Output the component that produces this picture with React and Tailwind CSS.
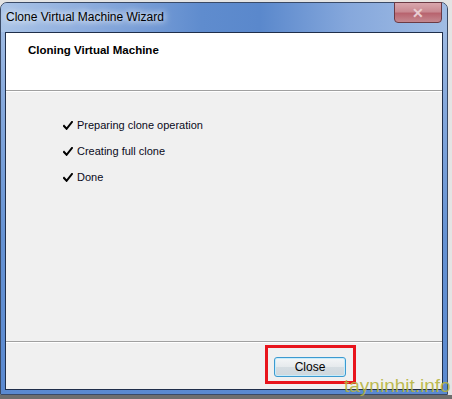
import React from "react";

function Check() {
  return (
    <svg width="10" height="9" viewBox="0 0 10 9" className="shrink-0">
      <path d="M1 5 L3.6 7.8 L9 1" fill="none" stroke="#000" strokeWidth="2" strokeLinecap="square" />
    </svg>
  );
}

export default function App() {
  const ui = { fontFamily: '"Liberation Sans", Arial, sans-serif' };
  return (
    <div className="relative w-[452px] h-[399px] overflow-hidden bg-[#e4e4e4]" style={ui}>
      <div className="absolute left-0 right-0 bottom-0 h-[4px] bg-[#6e6e6e]" />
      <div className="w-[448px] h-[395px] pt-[2px]">
        <div className="relative flex flex-col h-[393px] rounded-t-[7px] border border-[#3a4a66] bg-[linear-gradient(180deg,#a7c1e6_0%,#86a9dc_25%,#6592d3_60%,#5a89d0_100%)] px-[4px] pb-[4px]">
          <div className="flex h-[29px] items-start justify-between -mx-[4px] px-[5px] rounded-t-[6px] bg-[linear-gradient(90deg,#aac4e7_0%,#88a9dc_22%,#5f8cce_45%,#5a88cc_58%,#86a8dc_78%,#a0bce4_100%)]">
            <div className="pt-[7px] text-[12px] leading-[15px] text-black [text-shadow:0_0_6px_#fff,0_0_10px_#fff]">
              Clone Virtual Machine Wizard
            </div>
            <div className="mt-[-1px] flex h-[21px] w-[48px] items-center justify-center rounded-b-[4px] border border-[#6b3a44] bg-[linear-gradient(180deg,#d9a7ad_0%,#c98a92_45%,#b8646f_55%,#c58890_100%)]">
              <span className="text-[14px] font-bold leading-none text-[#e9cdd1]">✕</span>
            </div>
          </div>
          <div className="flex flex-1 flex-col border border-[#1f2e4a] bg-[#f0f0f0]">
            <div className="h-[57px] bg-white pl-[22px] pt-[10px]">
              <div className="text-[11.5px] font-bold leading-[14px] text-black">Cloning Virtual Machine</div>
            </div>
            <div className="h-px bg-[#a0a0a0]" />
            <div className="h-px bg-white" />
            <div className="flex flex-1 flex-col gap-[12px] pl-[57px] pt-[26px]">
              <div className="flex items-center gap-[4px] text-[11px] leading-[14px] text-[#0a0a1a]">
                <Check />
                <span>Preparing clone operation</span>
              </div>
              <div className="flex items-center gap-[4px] text-[11px] leading-[14px] text-[#0a0a1a]">
                <Check />
                <span>Creating full clone</span>
              </div>
              <div className="flex items-center gap-[4px] text-[11px] leading-[14px] text-[#0a0a1a]">
                <Check />
                <span>Done</span>
              </div>
            </div>
            <div className="h-px bg-[#a0a0a0]" />
            <div className="h-px bg-white" />
            <div className="flex h-[46px] items-start justify-end pr-[86px] pt-[2px]">
              <div className="border-[3px] border-[#e8141c] pl-[6px] pr-[7px] pt-[9px] pb-[4px]">
                <button className="flex h-[20px] w-[72px] items-center justify-center rounded-[3px] border border-[#3c9ad0] bg-[linear-gradient(180deg,#f4f6f7_0%,#e6eaed_48%,#d5dde2_52%,#cfd7dd_100%)] text-[12px] text-black shadow-[inset_0_0_0_1px_#c7ecfb]">
                  Close
                </button>
              </div>
            </div>
          </div>
        </div>
      </div>
      <div className="pointer-events-none absolute left-[344px] top-[375px] text-[19px] leading-[22px] text-[#b5b33c]/90">
        tayninhit.info
      </div>
    </div>
  );
}
